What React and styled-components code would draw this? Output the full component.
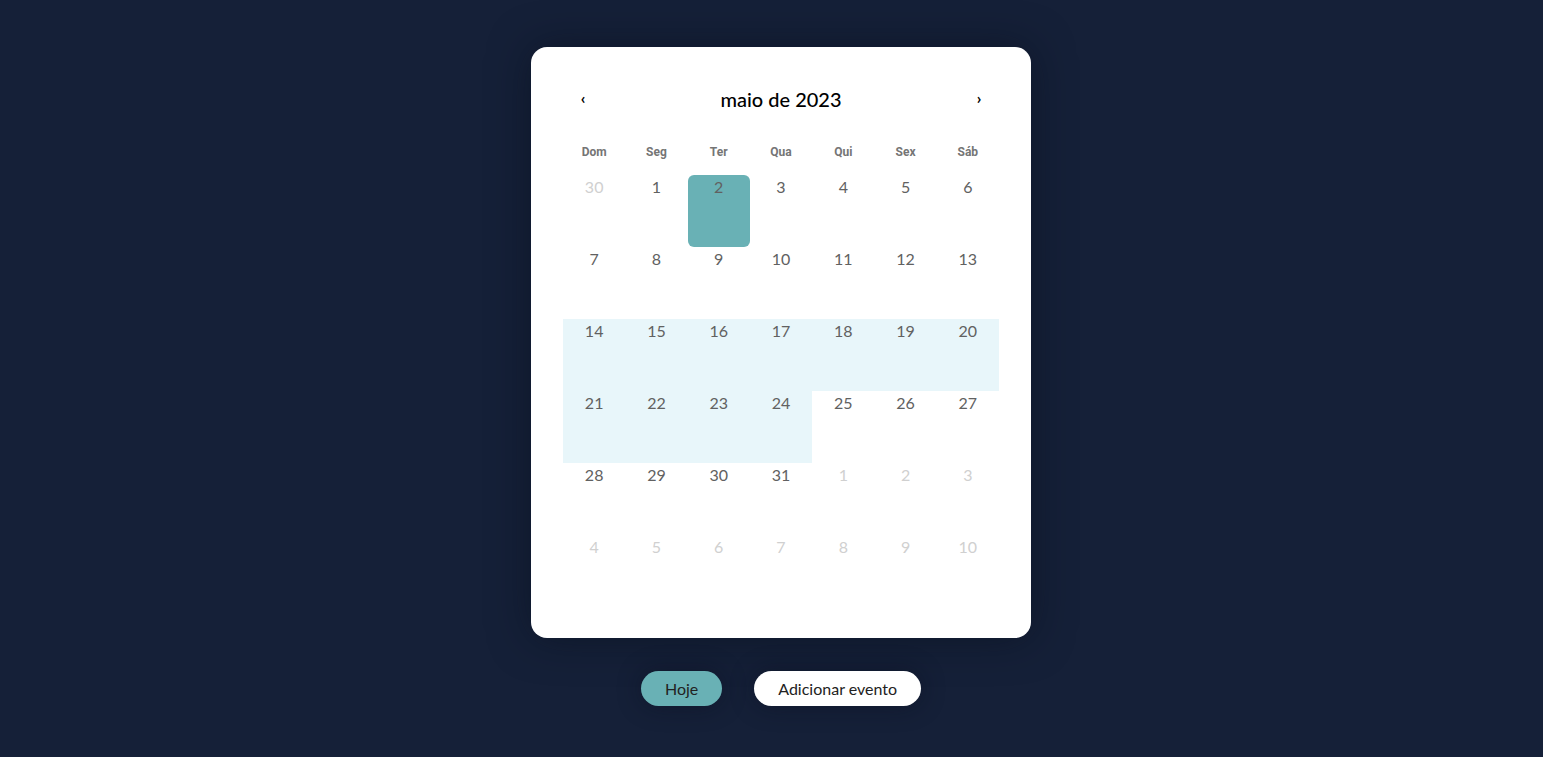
import React from "react";
import styled, { createGlobalStyle } from "styled-components";

const GlobalStyle = createGlobalStyle`
  html, body {
    margin: 0;
    padding: 0;
    background: #152038;
    font-family: Lato, "Noto Sans", sans-serif;
  }
`;

const Page = styled.div`
  min-height: 757px;
  display: flex;
  flex-direction: column;
  align-items: center;
  padding: 47px 0 0 19px;
  box-sizing: border-box;
`;

const Card = styled.div`
  width: 500px;
  box-sizing: border-box;
  padding: 32px 32px 31px;
  background: #ffffff;
  border-radius: 16px;
  box-shadow: 0 0 40px rgba(8, 14, 28, 0.55);
`;

const Nav = styled.div`
  height: 40px;
  display: flex;
  align-items: center;
  margin-bottom: 24px;
`;

const Arrow = styled.button`
  width: 40px;
  height: 40px;
  border: none;
  background: none;
  padding: 0 0 4px;
  font-family: Lato, sans-serif;
  font-size: 16px;
  font-weight: 700;
  color: #000;
  cursor: pointer;
`;

const Title = styled.div`
  flex: 1;
  text-align: center;
  font-size: 20px;
  font-weight: 500;
  color: #000;
`;

const Grid = styled.div`
  display: grid;
  grid-template-columns: repeat(7, 1fr);
`;

const Weekday = styled.div`
  text-align: center;
  font-family: Roboto, sans-serif;
  font-size: 12px;
  font-weight: 700;
  line-height: 18px;
  color: #757575;
  margin-bottom: 14px;
`;

const Day = styled.div`
  height: 72px;
  box-sizing: border-box;
  padding-top: 2px;
  text-align: center;
  font-size: 16px;
  line-height: 20px;
  color: ${(p) => (p.outside ? "#d0d0d0" : "#616161")};
  background: ${(p) =>
    p.selected ? "#69b1b5" : p.inRange ? "#e8f6fa" : "transparent"};
  border-radius: ${(p) => (p.selected ? "6px" : "0")};
`;

const Actions = styled.div`
  display: flex;
  gap: 32px;
  margin-top: 33px;
`;

const Pill = styled.button`
  height: 35px;
  padding: 0 24px;
  border: none;
  border-radius: 18px;
  background: ${(p) => (p.primary ? "#69b1b5" : "#ffffff")};
  color: #222;
  font-family: Lato, sans-serif;
  font-size: 16px;
  box-shadow: 0 0 24px rgba(8, 14, 28, 0.45);
  cursor: pointer;
`;

const WEEKDAYS = ["Dom", "Seg", "Ter", "Qua", "Qui", "Sex", "Sáb"];

const buildDays = () => {
  const days = [{ n: 30, outside: true }];
  for (let i = 1; i <= 31; i++) days.push({ n: i });
  for (let i = 1; i <= 10; i++) days.push({ n: i, outside: true });
  return days;
};

const App = () => {
  const days = buildDays();
  return (
    <Page>
      <GlobalStyle />
      <Card>
        <Nav>
          <Arrow>‹</Arrow>
          <Title>maio de 2023</Title>
          <Arrow>›</Arrow>
        </Nav>
        <Grid>
          {WEEKDAYS.map((w) => (
            <Weekday key={w}>{w}</Weekday>
          ))}
          {days.map((d, i) => (
            <Day
              key={`day${i}`}
              outside={d.outside}
              selected={!d.outside && d.n === 2}
              inRange={!d.outside && d.n >= 14 && d.n <= 24}
            >
              {d.n}
            </Day>
          ))}
        </Grid>
      </Card>
      <Actions>
        <Pill primary>Hoje</Pill>
        <Pill>Adicionar evento</Pill>
      </Actions>
    </Page>
  );
};

export default App;
